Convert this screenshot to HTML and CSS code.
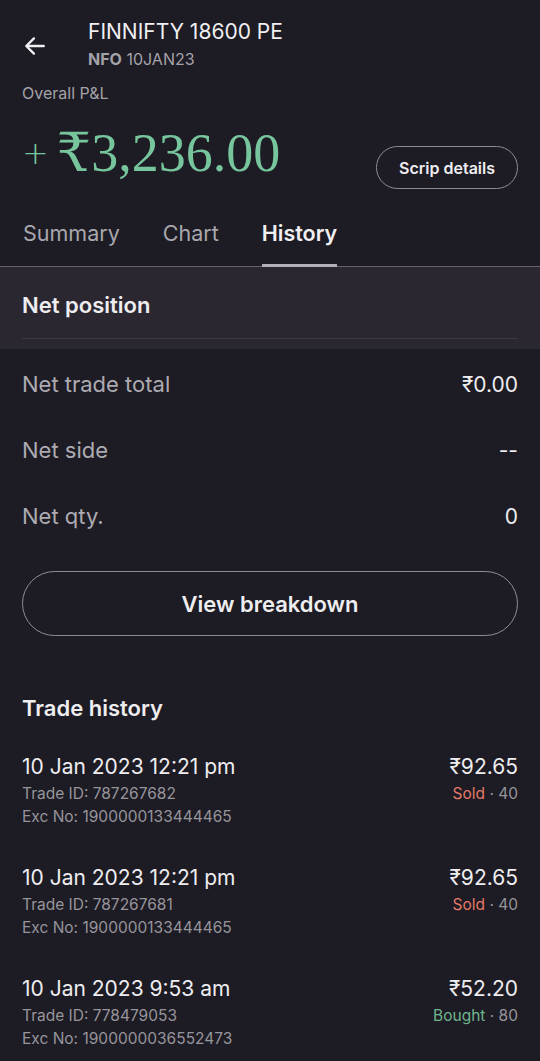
FILE: index.html
```html
<!DOCTYPE html>
<html lang="en">
<head>
    <meta charset="UTF-8">
    <meta name="viewport" content="width=device-width, initial-scale=1.0">
    <title>FINNIFTY 18600 PE</title>
    <link rel="stylesheet" href="styles.css">
</head>
<body>

    <div class="header">
        <div class="back">
            <svg width="26" height="26" viewBox="0 0 24 24" fill="none" stroke="#f0eff2" stroke-width="2.2" stroke-linecap="round" stroke-linejoin="round">
                <path d="M20 12H4.5"/>
                <path d="M11 5l-7 7 7 7"/>
            </svg>
        </div>
        <div>
            <div class="title">FINNIFTY 18600 PE</div>
            <div class="subtitle"><b>NFO</b> 10JAN23</div>
        </div>
    </div>

    <div class="pnl-label">Overall P&amp;L</div>
    <div class="pnl-row">
        <div class="pnl-value"><span class="plus">+</span>₹3,236.00</div>
        <button class="scrip-btn">Scrip details</button>
    </div>

    <div class="tabs">
        <div class="tab">Summary</div>
        <div class="tab">Chart</div>
        <div class="tab active">History</div>
    </div>

    <div class="net-head">
        <div class="section-title">Net position</div>
        <div class="net-line"></div>
    </div>

    <div class="net-rows">
        <div class="net-row"><span class="label">Net trade total</span><span class="value">₹0.00</span></div>
        <div class="net-row"><span class="label">Net side</span><span class="value">--</span></div>
        <div class="net-row"><span class="label">Net qty.</span><span class="value">0</span></div>
    </div>

    <div class="breakdown-wrap">
        <button class="breakdown-btn">View breakdown</button>
    </div>

    <div class="section-title history-title">Trade history</div>

    <div class="trades">
        <div class="trade">
            <div>
                <div class="trade-date">10 Jan 2023 12:21 pm</div>
                <div class="trade-sub">Trade ID: 787267682</div>
                <div class="trade-sub">Exc No: 1900000133444465</div>
            </div>
            <div class="trade-right">
                <div class="trade-price">₹92.65</div>
                <div class="trade-sub"><span class="sold">Sold</span> · 40</div>
            </div>
        </div>
        <div class="trade">
            <div>
                <div class="trade-date">10 Jan 2023 12:21 pm</div>
                <div class="trade-sub">Trade ID: 787267681</div>
                <div class="trade-sub">Exc No: 1900000133444465</div>
            </div>
            <div class="trade-right">
                <div class="trade-price">₹92.65</div>
                <div class="trade-sub"><span class="sold">Sold</span> · 40</div>
            </div>
        </div>
        <div class="trade">
            <div>
                <div class="trade-date">10 Jan 2023 9:53 am</div>
                <div class="trade-sub">Trade ID: 778479053</div>
                <div class="trade-sub">Exc No: 1900000036552473</div>
            </div>
            <div class="trade-right">
                <div class="trade-price">₹52.20</div>
                <div class="trade-sub"><span class="bought">Bought</span> · 80</div>
            </div>
        </div>
    </div>

</body>
</html>
```

FILE: styles.css
```css
body {
    margin: 0;
    background-color: #1d1b23;
    color: #eeedf0;
    font-family: Inter, "Noto Sans", "DejaVu Sans", sans-serif;
    overflow: hidden;
}
button {
    font-family: inherit;
    background: none;
    color: #eeedf0;
    cursor: pointer;
}
.header {
    display: flex;
    align-items: center;
    padding: 19px 22px 0;
}
.back {
    width: 66px;
    display: flex;
    align-items: center;
    padding-top: 4px;
}
.title {
    font-size: 21px;
    line-height: 26px;
    color: #f0eff2;
}
.subtitle {
    margin-top: 4px;
    font-size: 16px;
    line-height: 20px;
    color: #a4a2a9;
}
.subtitle b {
    font-weight: 700;
}
.pnl-label {
    margin-top: 14px;
    padding: 0 22px;
    font-size: 16px;
    line-height: 20px;
    color: #a4a2a9;
}
.pnl-row {
    display: flex;
    justify-content: space-between;
    align-items: flex-start;
    padding: 0 22px;
    margin-top: 22px;
}
.pnl-value {
    font-family: "Liberation Serif", "DejaVu Serif", serif;
    font-size: 54px;
    line-height: 56px;
    color: #76c59d;
}
.plus {
    font-family: "DejaVu Sans", sans-serif;
    font-weight: 300;
    font-size: 32px;
    margin-right: 8px;
    vertical-align: 7px;
}
.scrip-btn {
    margin-top: 21px;
    height: 43px;
    padding: 0 22px;
    border: 1px solid #8f8c94;
    border-radius: 22px;
    font-size: 16px;
    font-weight: 600;
}
.tabs {
    display: flex;
    gap: 43px;
    padding: 0 23px;
    margin-top: 30px;
    border-bottom: 1px solid #66636b;
}
.tab {
    font-size: 21.5px;
    line-height: 28px;
    padding-bottom: 19px;
    color: #a9a7ae;
}
.tab.active {
    color: #f0eff2;
    font-weight: 600;
    padding-bottom: 16px;
    border-bottom: 3px solid #b3b0b8;
    margin-bottom: -1px;
}
.net-head {
    background-color: #2a2730;
    padding: 25px 22px 10px;
}
.section-title {
    font-size: 22px;
    line-height: 26px;
    font-weight: 600;
    color: #eeedf0;
}
.net-line {
    margin-top: 20px;
    height: 1px;
    background-color: #3b3841;
}
.net-rows {
    padding: 2px 22px 0;
}
.net-row {
    height: 66px;
    display: flex;
    justify-content: space-between;
    align-items: center;
    font-size: 22px;
}
.label {
    color: #adabb2;
}
.value {
    font-size: 21px;
    color: #eeedf0;
}
.breakdown-wrap {
    padding: 22px 22px 0;
}
.breakdown-btn {
    width: 100%;
    height: 65px;
    border: 1.5px solid #8f8c94;
    border-radius: 33px;
    font-size: 22px;
    font-weight: 600;
}
.history-title {
    margin-top: 59px;
    padding: 0 22px;
}
.trades {
    margin-top: 17px;
    padding: 0 22px;
}
.trade {
    display: flex;
    justify-content: space-between;
    padding: 16px 0 21px;
}
.trade-right {
    text-align: right;
}
.trade-date,
.trade-price {
    font-size: 21px;
    line-height: 26px;
    margin-bottom: 2px;
    color: #eeedf0;
}
.trade-sub {
    font-size: 15.5px;
    line-height: 23px;
    color: #97959c;
}
.sold {
    color: #e37a68;
}
.bought {
    color: #6fb68e;
}
```
